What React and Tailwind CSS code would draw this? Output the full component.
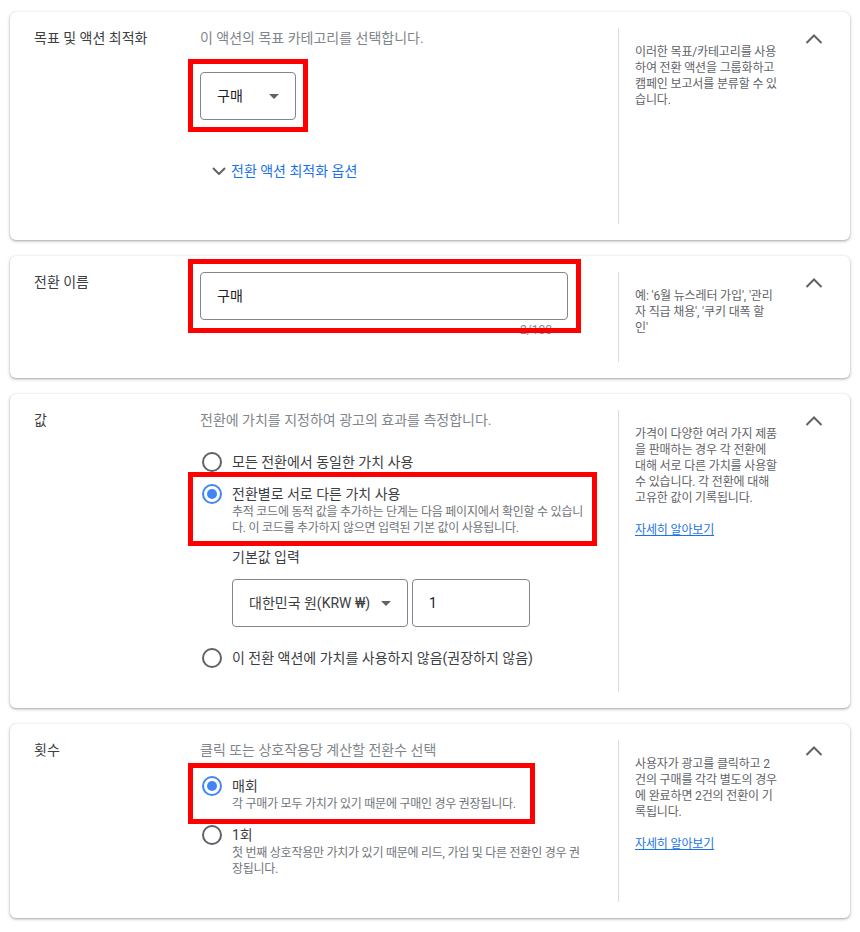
import React from "react";

function Chevron() {
  return (
    <svg width="24" height="24" viewBox="0 0 24 24" className="block">
      <polyline points="4.5,15 12,7.5 19.5,15" fill="none" stroke="#5f6368" strokeWidth="2" />
    </svg>
  );
}

function Triangle() {
  return (
    <svg width="10" height="5" viewBox="0 0 10 5" className="block shrink-0">
      <polygon points="0,0 10,0 5,5" fill="#5f6368" />
    </svg>
  );
}

function Radio({ checked }) {
  return (
    <span
      className={
        checked
          ? "flex h-5 w-5 items-center justify-center rounded-full border-2 border-[#4285f4]"
          : "flex h-5 w-5 items-center justify-center rounded-full border-2 border-[#5f6368]"
      }
    >
      {checked && <span className="h-[10px] w-[10px] rounded-full bg-[#4285f4]" />}
    </span>
  );
}

function RadioRow({ checked, label, sub }) {
  return (
    <div className="flex">
      <div className="flex h-5 w-6 shrink-0 items-center justify-center">
        <Radio checked={checked} />
      </div>
      <div className="ml-2">
        <div className="text-[14px] leading-5 text-[#3c4043]">{label}</div>
        {sub &&
          sub.map((l, i) => (
            <div key={i} className="whitespace-nowrap text-[12px] leading-4 tracking-[-0.25px] text-[#70757a]">
              {l}
            </div>
          ))}
      </div>
    </div>
  );
}

function Highlight({ className }) {
  return <div className={"pointer-events-none absolute border-[5px] border-[#ff0000] " + className} />;
}

function Card({ label, help, link, children, contentClass }) {
  return (
    <section className="flex rounded-[6px] bg-white px-6 py-4 shadow-[0_1px_2px_0_rgba(60,64,67,0.3),0_1px_3px_1px_rgba(60,64,67,0.15)]">
      <div className="w-[166px] shrink-0 text-[14px] leading-5 text-[#3c4043]">{label}</div>
      <div className={"w-[418px] shrink-0 pr-5 " + contentClass}>{children}</div>
      <div className="w-[168px] shrink-0 border-l border-[#dadce0] pl-4 pt-4 text-[12px] leading-4 tracking-[-0.15px] text-[#5f6368]">
        {help.map((l, i) => (
          <div key={i} className="whitespace-nowrap">
            {l}
          </div>
        ))}
        {link && (
          <div className="mt-4 text-[12px] leading-4 text-[#1a73e8] underline">자세히 알아보기</div>
        )}
      </div>
      <div className="flex flex-1 justify-end">
        <Chevron />
      </div>
    </section>
  );
}

export default function App() {
  return (
    <div className="min-h-[932px] w-full bg-white px-[10px] pt-3 pb-4 font-['Roboto','Noto_Sans_CJK_KR',sans-serif]">
      <div className="flex flex-col gap-4">
        <Card
          label="목표 및 액션 최적화"
          help={["이러한 목표/카테고리를 사용", "하여 전환 액션을 그룹화하고", "캠페인 보고서를 분류할 수 있", "습니다."]}
          contentClass="pb-[43px]"
        >
          <div className="text-[14px] leading-5 text-[#80868b]">이 액션의 목표 카테고리를 선택합니다.</div>
          <div className="relative mt-6 w-[96px]">
            <div className="flex h-12 w-[96px] items-center justify-between rounded border border-[#80868b] pl-4 pr-4">
              <span className="text-[14px] text-[#202124]">구매</span>
              <Triangle />
            </div>
            <Highlight className="-left-3 -top-[13px] h-[73px] w-[120px]" />
          </div>
          <div className="mt-[41px] flex h-5 items-center">
            <svg width="14" height="8" viewBox="0 0 14 8" className="ml-3 block">
              <polyline points="1,1 7,7 13,1" fill="none" stroke="#5f6368" strokeWidth="2" />
            </svg>
            <span className="ml-[5px] text-[14px] leading-5 text-[#1a73e8]">전환 액션 최적화 옵션</span>
          </div>
        </Card>

        <Card
          label="전환 이름"
          help={["예: '6월 뉴스레터 가입', '관리", "자 직급 채용', '쿠키 대폭 할", "인'"]}
          contentClass="pb-6"
        >
          <div className="relative w-[368px]">
            <div className="flex h-12 w-[368px] items-center rounded border border-[#80868b] pl-4">
              <span className="text-[14px] text-[#202124]">구매</span>
            </div>
            <div className="mt-[2px] pr-4 text-right text-[12px] leading-4 text-[#80868b]">2/100</div>
            <Highlight className="-left-3 -top-[13px] h-[74px] w-[393px]" />
          </div>
        </Card>

        <Card
          label="값"
          help={[
            "가격이 다양한 여러 가지 제품",
            "을 판매하는 경우 각 전환에",
            "대해 서로 다른 가치를 사용할",
            "수 있습니다. 각 전환에 대해",
            "고유한 값이 기록됩니다.",
          ]}
          link
          contentClass="pb-6"
        >
          <div className="text-[14px] leading-5 text-[#80868b]">전환에 가치를 지정하여 광고의 효과를 측정합니다.</div>
          <div className="mt-[22px]">
            <RadioRow label="모든 전환에서 동일한 가치 사용" />
          </div>
          <div className="relative mt-3">
            <RadioRow
              checked
              label="전환별로 서로 다른 가치 사용"
              sub={[
                "추적 코드에 동적 값을 추가하는 단계는 다음 페이지에서 확인할 수 있습니",
                "다. 이 코드를 추가하지 않으면 입력된 기본 값이 사용됩니다.",
              ]}
            />
            <Highlight className="-left-3 -top-3 h-[74px] w-[409px]" />
          </div>
          <div className="ml-8 mt-[11px] text-[14px] leading-5 text-[#3c4043]">기본값 입력</div>
          <div className="ml-8 mt-3 flex">
            <div className="flex h-12 w-[176px] items-center justify-between rounded border border-[#80868b] pl-4 pr-4">
              <span className="whitespace-nowrap text-[14px] text-[#3c4043]">대한민국 원(KRW ₩)</span>
              <Triangle />
            </div>
            <div className="ml-1 flex h-12 w-[118px] items-center rounded border border-[#80868b] pl-4">
              <span className="text-[14px] text-[#202124]">1</span>
            </div>
          </div>
          <div className="mt-[21px]">
            <RadioRow label="이 전환 액션에 가치를 사용하지 않음(권장하지 않음)" />
          </div>
        </Card>

        <Card
          label="횟수"
          help={["사용자가 광고를 클릭하고 2", "건의 구매를 각각 별도의 경우", "에 완료하면 2건의 전환이 기", "록됩니다."]}
          link
          contentClass="pb-[25px]"
        >
          <div className="text-[14px] leading-5 text-[#80868b]">클릭 또는 상호작용당 계산할 전환수 선택</div>
          <div className="relative mt-4">
            <RadioRow checked label="매회" sub={["각 구매가 모두 가치가 있기 때문에 구매인 경우 권장됩니다."]} />
            <Highlight className="-left-3 -top-[13px] h-[61px] w-[347px]" />
          </div>
          <div className="mt-[13px]">
            <RadioRow
              label="1회"
              sub={["첫 번째 상호작용만 가치가 있기 때문에 리드, 가입 및 다른 전환인 경우 권", "장됩니다."]}
            />
          </div>
        </Card>
      </div>
    </div>
  );
}
